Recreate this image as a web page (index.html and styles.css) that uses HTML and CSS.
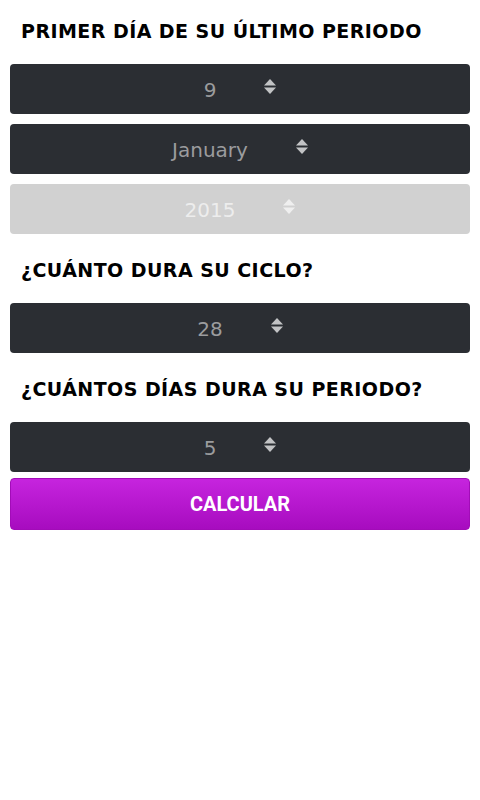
FILE: index.html
```html
<!DOCTYPE html>
<html lang="es">
  <head>
    <meta charset="UTF-8" />
    <meta name="viewport" content="width=device-width, initial-scale=1.0" />
    <title>Calculadora</title>
    <link rel="stylesheet" href="styles.css">
  </head>
  <body>
    <form class="calc">
      <h2 class="label first">PRIMER DÍA DE SU ÚLTIMO PERIODO</h2>
      <div class="select">
        <span class="value">9</span>
        <svg class="arrows" width="12" height="15" viewBox="0 0 12 15"><polygon points="0,6.5 6,0 12,6.5" /><polygon points="0,8.5 12,8.5 6,15" /></svg>
      </div>
      <div class="select">
        <span class="value">January</span>
        <svg class="arrows" width="12" height="15" viewBox="0 0 12 15"><polygon points="0,6.5 6,0 12,6.5" /><polygon points="0,8.5 12,8.5 6,15" /></svg>
      </div>
      <div class="select disabled">
        <span class="value">2015</span>
        <svg class="arrows" width="12" height="15" viewBox="0 0 12 15"><polygon points="0,6.5 6,0 12,6.5" /><polygon points="0,8.5 12,8.5 6,15" /></svg>
      </div>

      <h2 class="label">¿CUÁNTO DURA SU CICLO?</h2>
      <div class="select">
        <span class="value">28</span>
        <svg class="arrows" width="12" height="15" viewBox="0 0 12 15"><polygon points="0,6.5 6,0 12,6.5" /><polygon points="0,8.5 12,8.5 6,15" /></svg>
      </div>

      <h2 class="label">¿CUÁNTOS DÍAS DURA SU PERIODO?</h2>
      <div class="select last">
        <span class="value">5</span>
        <svg class="arrows" width="12" height="15" viewBox="0 0 12 15"><polygon points="0,6.5 6,0 12,6.5" /><polygon points="0,8.5 12,8.5 6,15" /></svg>
      </div>

      <button type="button" class="calc-button">CALCULAR</button>
    </form>
  </body>
</html>
```

FILE: styles.css
```css
body {
  margin: 0;
  background-color: #fff;
  font-family: "DejaVu Sans", sans-serif;
}

.calc {
  padding: 0 10px 10px;
}

.label {
  margin: 0;
  padding: 14px 11px 21px;
  font-size: 19px;
  line-height: 24px;
  font-weight: bold;
  letter-spacing: 0.45px;
  color: #000;
}

.label.first {
  padding-top: 19px;
}

.select {
  height: 50px;
  margin-bottom: 10px;
  border-radius: 4px;
  background-color: #2b2e33;
  display: flex;
  justify-content: center;
  align-items: center;
}

.select .value {
  font-size: 20px;
  line-height: 24px;
  color: #9b9c9e;
  padding-top: 1px;
}

.select .arrows {
  margin-left: 48px;
  margin-top: -5px;
  fill: #c2c3c5;
}

.select.disabled {
  background-color: #d1d1d1;
}

.select.disabled .value {
  color: #ededed;
}

.select.disabled .arrows {
  fill: #efefef;
}

.select.last {
  margin-bottom: 6px;
}

.calc-button {
  display: block;
  width: 100%;
  height: 52px;
  padding: 0;
  border: 1px solid #a20cb8;
  border-radius: 4px;
  background: linear-gradient(#c624de, #a70cbf);
  color: #fff;
  font-family: Roboto, "Liberation Sans", sans-serif;
  font-size: 20px;
  font-weight: bold;
  cursor: pointer;
}
```
